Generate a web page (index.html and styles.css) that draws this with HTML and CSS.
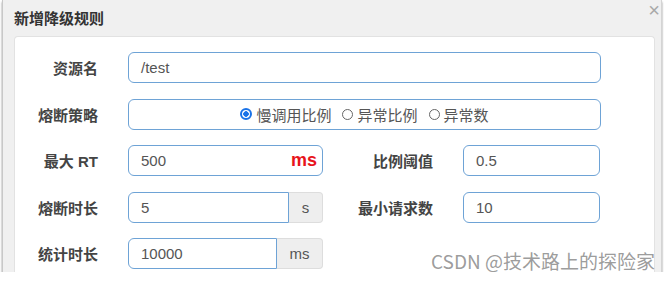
FILE: index.html
```html
<!DOCTYPE html>
<html lang="zh-CN">
<head>
  <meta charset="UTF-8">
  <title>新增降级规则</title>
  <link rel="stylesheet" href="styles.css">
</head>
<body>
  <div class="modal">
    <div class="modal-header">
      <h4 class="modal-title">新增降级规则</h4>
      <span class="close">&times;</span>
    </div>

    <div class="card">
      <!-- 资源名 -->
      <div class="form-row">
        <label class="label">资源名</label>
        <div class="input wide">/test</div>
      </div>

      <!-- 熔断策略 -->
      <div class="form-row">
        <label class="label">熔断策略</label>
        <div class="input wide radio-box">
          <span class="radio checked"></span><span class="radio-text">慢调用比例</span>
          <span class="radio"></span><span class="radio-text">异常比例</span>
          <span class="radio"></span><span class="radio-text">异常数</span>
        </div>
      </div>

      <!-- 最大 RT / 比例阈值 -->
      <div class="form-row">
        <label class="label">最大 RT</label>
        <div class="input half rt">500<span class="unit-red">ms</span></div>
        <label class="label label-2">比例阈值</label>
        <div class="input small">0.5</div>
      </div>

      <!-- 熔断时长 / 最小请求数 -->
      <div class="form-row">
        <label class="label">熔断时长</label>
        <div class="group half">
          <div class="input grow">5</div>
          <span class="addon addon-s">s</span>
        </div>
        <label class="label label-2">最小请求数</label>
        <div class="input small">10</div>
      </div>

      <!-- 统计时长 -->
      <div class="form-row last">
        <label class="label">统计时长</label>
        <div class="group half">
          <div class="input grow">10000</div>
          <span class="addon addon-ms">ms</span>
        </div>
      </div>
    </div>

    <div class="watermark">CSDN @技术路上的探险家</div>
  </div>
</body>
</html>
```

FILE: styles.css
```css
body {
  margin: 0;
  background-color: #fff;
  font-family: "Liberation Sans", "Noto Sans CJK SC", sans-serif;
  color: #555;
}

.modal {
  position: relative;
  margin-left: 2px;
  width: 660px;
  height: 272px;
  background-color: #f0f0f0;
  border-left: 1px solid #c8c8c8;
  border-right: 1px solid #d4d4d4;
  box-shadow: 0 2px 2px rgba(0, 0, 0, 0.45);
  padding: 0 6px 0 11px;
  box-sizing: border-box;
}

.modal-header {
  height: 36px;
  display: flex;
  justify-content: space-between;
  align-items: flex-start;
}

.modal-title {
  margin: 0;
  line-height: 38px;
  font-size: 15px;
  font-weight: bold;
  color: #333;
}

.close {
  font-size: 20px;
  line-height: 20px;
  color: #a8a8a8;
  margin-right: -5px;
}

.card {
  background-color: #fff;
  border: 1px solid #e2e2e2;
  border-bottom: none;
  border-radius: 4px 4px 0 0;
  height: 236px;
  padding-top: 15px;
  box-sizing: border-box;
}

.form-row {
  display: flex;
  align-items: center;
  height: 31px;
  margin-bottom: 15.5px;
}

.form-row.last {
  margin-bottom: 0;
}

.label {
  width: 83px;
  margin-right: 30px;
  text-align: right;
  font-size: 15px;
  font-weight: bold;
  color: #444;
  flex-shrink: 0;
}

.label-2 {
  width: 110px;
}

.input {
  height: 31px;
  box-sizing: border-box;
  border: 1px solid #6ea3d6;
  border-radius: 6px;
  padding: 0 12px;
  display: flex;
  align-items: center;
  font-size: 15px;
  color: #555;
}

.wide {
  width: 473px;
}

.half {
  width: 195px;
  margin-right: 0;
}

.small {
  width: 137px;
}

.rt {
  justify-content: space-between;
  padding-right: 5px;
}

.unit-red {
  color: #e8141b;
  font-weight: bold;
  font-size: 18px;
}

.radio-box {
  justify-content: center;
  font-family: "Noto Sans CJK SC", sans-serif;
  font-size: 15px;
  color: #555;
}

.radio {
  width: 11px;
  height: 11px;
  border: 1px solid #666;
  border-radius: 50%;
  box-sizing: border-box;
  margin-right: 4px;
}

.radio.checked {
  border: 2px solid #1a73e8;
  background: radial-gradient(circle, #1a73e8 0 2.5px, #fff 3px);
  width: 12px;
  height: 12px;
}

.radio-text {
  margin-right: 11px;
}

.radio-text:last-child {
  margin-right: 0;
}

.group {
  display: flex;
  height: 31px;
}

.grow {
  flex: 1;
  border-radius: 6px 0 0 6px;
}

.addon {
  display: flex;
  align-items: center;
  justify-content: center;
  background-color: #eee;
  border: 1px solid #ddd;
  border-left: none;
  border-radius: 0 4px 4px 0;
  font-size: 15px;
  color: #555;
  box-sizing: border-box;
}

.addon-s {
  width: 34px;
}

.addon-ms {
  width: 46px;
}

.watermark {
  position: absolute;
  right: 6px;
  bottom: -2px;
  line-height: 26px;
  font-family: "Noto Sans CJK SC", sans-serif;
  font-size: 19px;
  color: rgba(130, 130, 130, 0.8);
  text-shadow: 0 0 1px #fff;
}
```
